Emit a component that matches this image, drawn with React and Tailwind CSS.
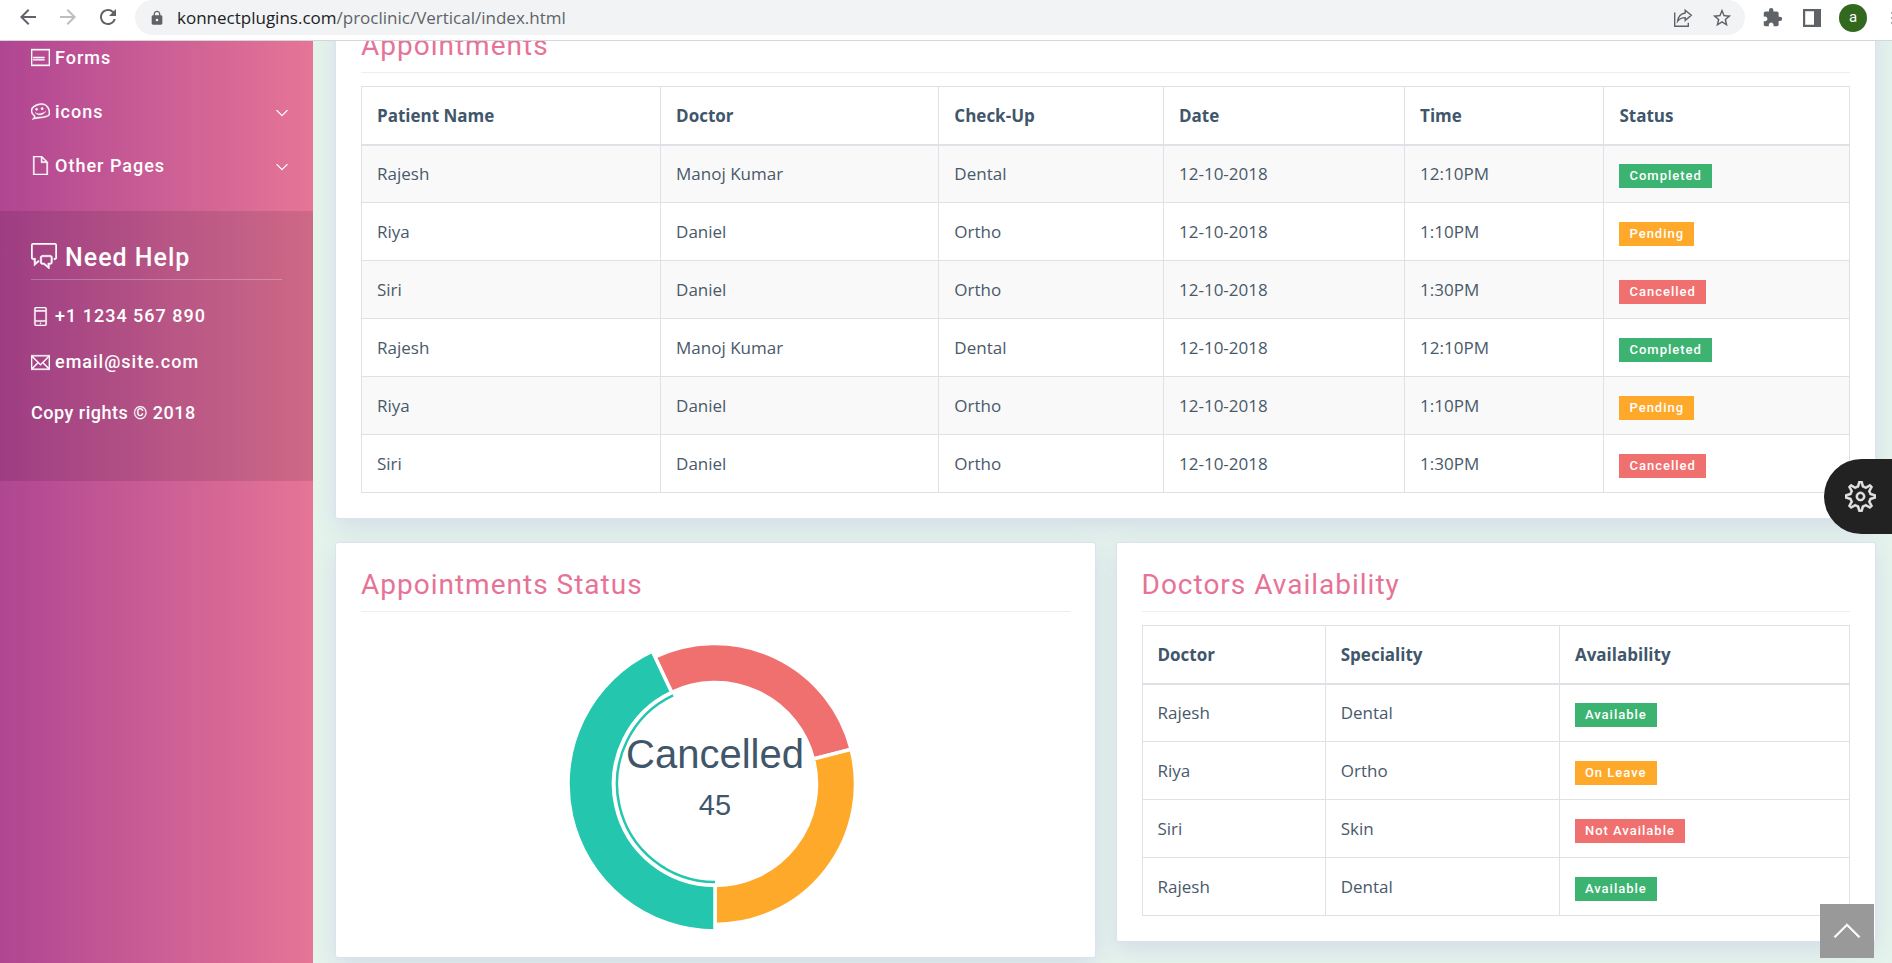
import {
  TfiAngleDown,
  TfiAngleUp,
  TfiComments,
  TfiEmail,
  TfiFile,
  TfiLayoutMediaOverlayAlt2,
  TfiMobile,
  TfiSettings,
  TfiThemifyFavicon,
} from "react-icons/tfi";
import {
  MdArrowBack,
  MdArrowForward,
  MdExtension,
  MdLock,
  MdMoreVert,
  MdRefresh,
  MdStarBorder,
} from "react-icons/md";

const badgeColors = {
  Completed: "bg-[#3cb371]",
  Available: "bg-[#3cb371]",
  Pending: "bg-[#ffa92b]",
  "On Leave": "bg-[#ffa92b]",
  Cancelled: "bg-[#f06f6f]",
  "Not Available": "bg-[#f06f6f]",
};

const appointments = [
  ["Rajesh", "Manoj Kumar", "Dental", "12-10-2018", "12:10PM", "Completed"],
  ["Riya", "Daniel", "Ortho", "12-10-2018", "1:10PM", "Pending"],
  ["Siri", "Daniel", "Ortho", "12-10-2018", "1:30PM", "Cancelled"],
  ["Rajesh", "Manoj Kumar", "Dental", "12-10-2018", "12:10PM", "Completed"],
  ["Riya", "Daniel", "Ortho", "12-10-2018", "1:10PM", "Pending"],
  ["Siri", "Daniel", "Ortho", "12-10-2018", "1:30PM", "Cancelled"],
];

const doctors = [
  ["Rajesh", "Dental", "Available"],
  ["Riya", "Ortho", "On Leave"],
  ["Siri", "Skin", "Not Available"],
  ["Rajesh", "Dental", "Available"],
];

function BrowserBar() {
  return (
    <header className="relative z-10 flex h-[41px] shrink-0 items-start overflow-hidden border-b border-[#d5d6d9] bg-white text-[#5f6368]">
      <div className="flex h-[34px] items-center gap-4 pl-4">
        <button aria-label="Back">
          <MdArrowBack className="size-6" />
        </button>
        <button aria-label="Forward" className="text-[#bcbec1]">
          <MdArrowForward className="size-6" />
        </button>
        <button aria-label="Reload">
          <MdRefresh className="size-6" />
        </button>
      </div>
      <div className="ml-[15px] flex h-[35px] flex-1 items-center rounded-full bg-[#f1f3f4] pr-3 pl-[14px]">
        <MdLock className="size-4" />
        <div
          role="textbox"
          aria-label="Address"
          className="ml-3 flex-1 font-['Open_Sans',sans-serif] text-[17px] leading-[34px]"
        >
          <span className="text-[#202124]">konnectplugins.com</span>/proclinic/Vertical/index.html
        </div>
        <div className="flex items-center gap-[18px]">
          <button aria-label="Share">
            <svg viewBox="0 0 20 20" className="size-5" fill="none" stroke="currentColor" strokeWidth="1.4">
              <path d="M1.7 4.5v13.8h13.6v-3.5" />
              <path d="M12.2 2.2 18.3 7.3l-6.1 5.1V9.600c-3.300 0-5.600 1.100-7.500 3.600.5-4.200 3-7.600 7.500-8.200z" />
            </svg>
          </button>
          <button aria-label="Bookmark">
            <MdStarBorder className="size-[22px]" />
          </button>
        </div>
      </div>
      <div className="flex h-[35px] items-center pl-[17px]">
        <button aria-label="Extensions">
          <MdExtension className="size-[21px]" />
        </button>
        <button aria-label="Side panel" className="ml-5">
          <svg viewBox="0 0 18 18" className="size-[18px]" fill="currentColor">
            <path fillRule="evenodd" d="M0 0h18v18H0zM2.200 2.200v13.600h8.800V2.200z" />
          </svg>
        </button>
        <button
          aria-label="Profile"
          className="ml-[18px] flex size-7 items-center justify-center rounded-full bg-[#33691e] font-[Roboto,sans-serif] text-[15px] text-white"
        >
          a
        </button>
        <button aria-label="More" className="-mr-[11px] ml-[16px]">
          <MdMoreVert className="size-5" />
        </button>
      </div>
    </header>
  );
}

function NavItem({ icon: Icon, label, expandable }) {
  return (
    <a href="#" className="flex h-[54px] items-center pr-[25px] pl-[31px]">
      <Icon className="size-[19px] stroke-[0.4px]" />
      <span className="ml-[5px] flex-1">{label}</span>
      {expandable && <TfiAngleDown className="mt-1 size-3 stroke-1" />}
    </a>
  );
}

function Sidebar() {
  return (
    <aside className="w-[313px] shrink-0 overflow-hidden bg-linear-to-r from-[#b04592] to-[#e67596] font-[Roboto,sans-serif] text-[18px] font-medium tracking-[1px] text-white">
      <nav className="-mt-[11px] pb-[19px]">
        <NavItem icon={TfiLayoutMediaOverlayAlt2} label="Forms" />
        <NavItem icon={TfiThemifyFavicon} label="icons" expandable />
        <NavItem icon={TfiFile} label="Other Pages" expandable />
      </nav>
      <section className="bg-black/10 px-[31px] pt-[31px] pb-[56px]">
        <h2 className="flex items-center gap-2 border-b border-white/25 pb-[5px] text-[25px] leading-[32px]">
          <TfiComments className="-mt-1 size-[26px] stroke-[0.3px]" />
          Need Help
        </h2>
        <p className="mt-6 flex items-center gap-[5px] leading-[24px]">
          <TfiMobile className="size-[19px] stroke-[0.4px]" />
          +1 1234 567 890
        </p>
        <p className="mt-[22px] flex items-center gap-[5px] leading-[24px]">
          <TfiEmail className="size-[19px] stroke-[0.4px]" />
          email@site.com
        </p>
        <p className="mt-[27px] leading-[24px] tracking-[0.5px]">Copy rights © 2018</p>
      </section>
    </aside>
  );
}

function Card({ title, className = "", children }) {
  return (
    <section
      className={`rounded-[3px] border border-[#dce2ee] bg-white p-[25px] shadow-[0_8px_22px_rgba(205,212,231,0.75)] ${className}`}
    >
      <h2 className="mb-[13px] border-b border-[#eeeeee] pb-[9px] font-[Roboto,sans-serif] text-[28px] leading-[34px] tracking-[1px] text-[#e67397]">
        {title}
      </h2>
      {children}
    </section>
  );
}

function DataTable({ label, columns, rows, striped }) {
  return (
    <table
      aria-label={label}
      className="w-full border-collapse font-['Open_Sans',sans-serif] text-[17px] leading-[25px] text-[#49596a]"
    >
      <thead>
        <tr>
          {columns.map(([name, width]) => (
            <th
              key={name}
              className={`h-[58px] border border-b-2 border-[#dee2e6] px-[15px] text-left font-bold text-[#3f566b] ${width}`}
            >
              {name}
            </th>
          ))}
        </tr>
      </thead>
      <tbody className={striped ? "[&>tr:nth-child(odd)]:bg-[#f9f9f9]" : ""}>
        {rows.map((row, r) => (
          <tr key={r}>
            {row.map((cell, c) => (
              <td key={c} className="h-[58px] border border-[#dee2e6] px-[15px]">
                {badgeColors[cell] ? (
                  <span
                    className={`mt-1 block w-fit px-[10px] font-[Roboto,sans-serif] text-[13px] leading-[24px] font-medium tracking-[1px] text-white ${badgeColors[cell]}`}
                  >
                    {cell}
                  </span>
                ) : (
                  cell
                )}
              </td>
            ))}
          </tr>
        ))}
      </tbody>
    </table>
  );
}

function point(radius, degrees) {
  const a = (degrees * Math.PI) / 180;
  return `${160 + radius * Math.cos(a)} ${160 - radius * Math.sin(a)}`;
}

function slice(inner, outer, from, to) {
  return `M${point(outer, from)}A${outer} ${outer} 0 0 0 ${point(outer, to)}L${point(inner, to)}A${inner} ${inner} 0 0 1 ${point(inner, from)}Z`;
}

function Donut() {
  return (
    <svg
      viewBox="0 1 320 307"
      className="mx-auto block h-[307px] w-[320px]"
      role="img"
      aria-label="Appointments by status"
    >
      <g stroke="#fff" strokeWidth="3.5">
        <path d={slice(101.5, 140.5, 14.3, 115.3)} fill="#f06f6f" />
        <path d={slice(101.5, 140.5, -90, 14.3)} fill="#ffa92b" />
        <path d={slice(101.5, 147, 115.3, 270)} fill="#24c6ae" />
      </g>
      <path
        d={`M${point(98, 115.3)}A98 98 0 0 0 ${point(98, 270)}`}
        fill="none"
        stroke="#24c6ae"
        strokeWidth="2.5"
      />
      <g fill="#3f566b" textAnchor="middle" fontFamily="Liberation Sans, Arial, sans-serif">
        <text x="160" y="144" fontSize="40">
          Cancelled
        </text>
        <text x="160" y="191" fontSize="29">
          45
        </text>
      </g>
    </svg>
  );
}

export default function App() {
  return (
    <div className="relative flex h-screen flex-col overflow-hidden">
      <BrowserBar />
      <div className="flex min-h-0 flex-1">
        <Sidebar />
        <main className="min-w-0 flex-1 overflow-hidden bg-[#e5f4ec] pr-4 pl-[22px]">
          <Card title="Appointments" className="-mt-[38px]">
            <DataTable
              label="Appointments"
              striped
              rows={appointments}
              columns={[
                ["Patient Name", "w-[20.1%]"],
                ["Doctor", "w-[18.7%]"],
                ["Check-Up", "w-[15.1%]"],
                ["Date", "w-[16.2%]"],
                ["Time", "w-[13.4%]"],
                ["Status", "w-[16.5%]"],
              ]}
            />
          </Card>
          <div className="mt-[23px] grid grid-cols-2 items-start gap-5">
            <Card title="Appointments Status">
              <Donut />
            </Card>
            <Card title="Doctors Availability">
              <DataTable
                label="Doctors availability"
                rows={doctors}
                columns={[
                  ["Doctor", "w-[25.9%]"],
                  ["Speciality", "w-[33.1%]"],
                  ["Availability", "w-[41%]"],
                ]}
              />
            </Card>
          </div>
        </main>
      </div>
      <button
        aria-label="Theme settings"
        className="absolute top-[459px] right-0 flex h-[75px] w-[68px] items-center justify-center rounded-l-full bg-[#222222] pl-1 text-[#e6e6e6]"
      >
        <TfiSettings className="size-[31px] stroke-[0.4px]" />
      </button>
      <button
        aria-label="Back to top"
        className="absolute right-[18px] bottom-[5px] flex size-[54px] items-center justify-center bg-[#999999] text-white"
      >
        <TfiAngleUp className="size-7 stroke-[0.4px]" />
      </button>
    </div>
  );
}
